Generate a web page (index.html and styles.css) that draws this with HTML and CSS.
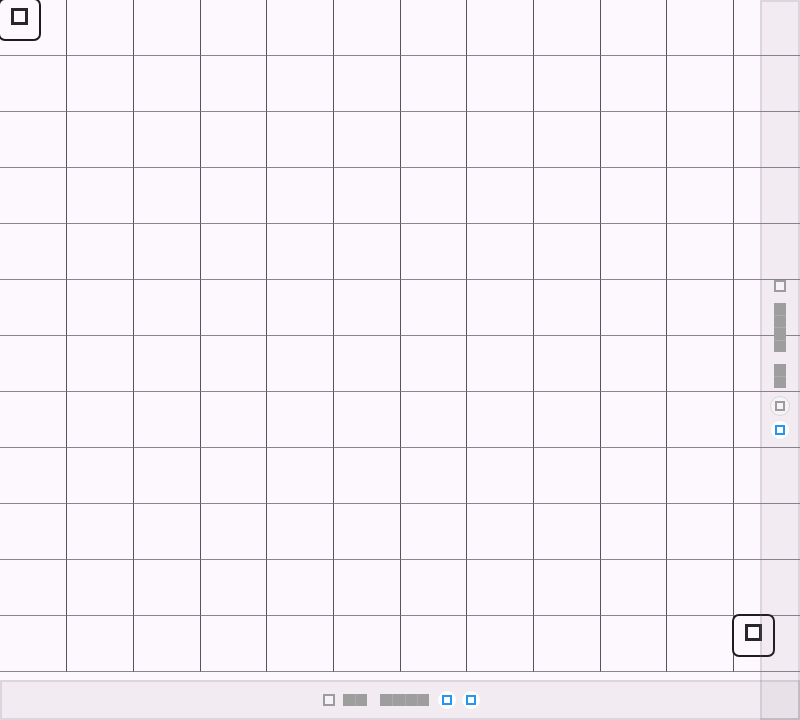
FILE: index.html
```html
<!DOCTYPE html>
<html lang="en">
<head>
<meta charset="utf-8">
<title>Canvas</title>
<link rel="stylesheet" href="styles.css">
</head>
<body>
<div class="board">
  <div class="grid">
    <div class="c"></div><div class="c"></div><div class="c"></div><div class="c"></div><div class="c"></div><div class="c"></div><div class="c"></div><div class="c"></div><div class="c"></div><div class="c"></div><div class="c"></div><div class="c"></div>
    <div class="c"></div><div class="c"></div><div class="c"></div><div class="c"></div><div class="c"></div><div class="c"></div><div class="c"></div><div class="c"></div><div class="c"></div><div class="c"></div><div class="c"></div><div class="c"></div>
    <div class="c"></div><div class="c"></div><div class="c"></div><div class="c"></div><div class="c"></div><div class="c"></div><div class="c"></div><div class="c"></div><div class="c"></div><div class="c"></div><div class="c"></div><div class="c"></div>
    <div class="c"></div><div class="c"></div><div class="c"></div><div class="c"></div><div class="c"></div><div class="c"></div><div class="c"></div><div class="c"></div><div class="c"></div><div class="c"></div><div class="c"></div><div class="c"></div>
    <div class="c"></div><div class="c"></div><div class="c"></div><div class="c"></div><div class="c"></div><div class="c"></div><div class="c"></div><div class="c"></div><div class="c"></div><div class="c"></div><div class="c"></div><div class="c"></div>
    <div class="c"></div><div class="c"></div><div class="c"></div><div class="c"></div><div class="c"></div><div class="c"></div><div class="c"></div><div class="c"></div><div class="c"></div><div class="c"></div><div class="c"></div><div class="c"></div>
    <div class="c"></div><div class="c"></div><div class="c"></div><div class="c"></div><div class="c"></div><div class="c"></div><div class="c"></div><div class="c"></div><div class="c"></div><div class="c"></div><div class="c"></div><div class="c"></div>
    <div class="c"></div><div class="c"></div><div class="c"></div><div class="c"></div><div class="c"></div><div class="c"></div><div class="c"></div><div class="c"></div><div class="c"></div><div class="c"></div><div class="c"></div><div class="c"></div>
    <div class="c"></div><div class="c"></div><div class="c"></div><div class="c"></div><div class="c"></div><div class="c"></div><div class="c"></div><div class="c"></div><div class="c"></div><div class="c"></div><div class="c"></div><div class="c"></div>
    <div class="c"></div><div class="c"></div><div class="c"></div><div class="c"></div><div class="c"></div><div class="c"></div><div class="c"></div><div class="c"></div><div class="c"></div><div class="c"></div><div class="c"></div><div class="c"></div>
    <div class="c"></div><div class="c"></div><div class="c"></div><div class="c"></div><div class="c"></div><div class="c"></div><div class="c"></div><div class="c"></div><div class="c"></div><div class="c"></div><div class="c"></div><div class="c"></div>
    <div class="c"></div><div class="c"></div><div class="c"></div><div class="c"></div><div class="c"></div><div class="c"></div><div class="c"></div><div class="c"></div><div class="c"></div><div class="c"></div><div class="c"></div><div class="c"></div>
  </div>

  <div class="fab fab-tl" role="button" aria-label="Corner"><span class="fab-icon"></span></div>
  <div class="fab fab-br" role="button" aria-label="Corner"><span class="fab-icon"></span></div>

  <div class="hbar">
    <span class="sq-icon"></span>
    <span class="ph ph-a"><i></i><i></i></span>
    <span class="ph ph-b"><i></i><i></i><i></i><i></i></span>
    <span class="pill pill-a"><span class="pill-icon"></span></span>
    <span class="pill"><span class="pill-icon"></span></span>
  </div>

  <div class="vbar">
    <span class="sq-icon"></span>
    <span class="ph ph-a"><i></i><i></i><i></i><i></i></span>
    <span class="ph ph-b"><i></i><i></i></span>
    <span class="pill pill-a pill-off"><span class="pill-icon"></span></span>
    <span class="pill"><span class="pill-icon"></span></span>
  </div>
</div>
</body>
</html>
```

FILE: styles.css
```css
* { box-sizing: border-box; }

html, body {
  margin: 0;
  padding: 0;
  width: 800px;
  height: 720px;
  overflow: hidden;
  background: #fdf8fd;
  font-family: "Liberation Sans", Arial, sans-serif;
}

.board {
  position: relative;
  width: 800px;
  height: 720px;
}

.grid {
  display: grid;
  grid-template-columns: 66px 67px 67px 66px 67px 67px 66px 67px 67px 66px 67px 67px;
  grid-auto-rows: 56px;
}

.c {
  border-left: 1px solid #58535c;
  border-bottom: 1px solid #8a858e;
}
.c:nth-child(12n+1) { border-left: none; }

/* floating corner buttons */
.fab {
  position: absolute;
  width: 43px;
  height: 43px;
  padding: 8px 0 0 11px;
  border: 2px solid #1c1b1d;
  border-radius: 7px;
  background: transparent;
}
.fab-tl { left: -2px; top: -2px; }
.fab-br { left: 732px; top: 614px; }

.fab-icon {
  display: block;
  width: 17px;
  height: 17px;
  border: 3.5px solid #272628;
}

/* bottom bar */
.hbar {
  position: absolute;
  left: 0;
  right: 0;
  bottom: 0;
  height: 40px;
  border: 2px solid rgba(120, 110, 125, 0.18);
  background: rgba(110, 100, 115, 0.08);
  display: flex;
  align-items: center;
  justify-content: center;
  padding-left: 4px;
}

/* right side bar */
.vbar {
  position: absolute;
  top: 0;
  right: 0;
  bottom: 0;
  width: 40px;
  border: 2px solid rgba(120, 110, 125, 0.18);
  background: rgba(110, 100, 115, 0.08);
  display: flex;
  flex-direction: column;
  align-items: center;
  justify-content: center;
}

.sq-icon {
  display: block;
  width: 12px;
  height: 12px;
  border: 2.5px solid #9d9b9e;
  background: #f6f3f6;
}

.ph {
  display: flex;
}
.ph i {
  display: block;
  width: 12px;
  height: 12px;
  background: #9e9e9e;
}
.hbar .ph i + i { border-left: 1px solid #ababab; width: 12.3px; }
.vbar .ph { flex-direction: column; }
.vbar .ph i + i { border-top: 1px solid #ababab; height: 12.3px; }

.pill {
  display: flex;
  align-items: center;
  justify-content: center;
  width: 20px;
  height: 20px;
  border-radius: 50%;
  background: #ffffff;
  border: 1px solid rgba(0, 0, 0, 0.07);
}
.pill-icon {
  display: block;
  width: 10px;
  height: 10px;
  border: 2px solid #2196f3;
}
.pill-off {
  background: #f5f3f5;
  border-color: #d9d6d9;
}
.pill-off .pill-icon { border-color: #9d9b9e; }

/* spacing in the bottom bar */
.hbar .ph-a { margin-left: 8px; }
.hbar .ph-b { margin-left: 13px; }
.hbar .pill-a { margin-left: 8px; }
.hbar .pill + .pill { margin-left: 4px; }

/* spacing in the side bar */
.vbar .ph-a { margin-top: 11px; }
.vbar .ph-b { margin-top: 12px; }
.vbar .pill-a { margin-top: 8px; }
.vbar .pill + .pill { margin-top: 4px; }
```
